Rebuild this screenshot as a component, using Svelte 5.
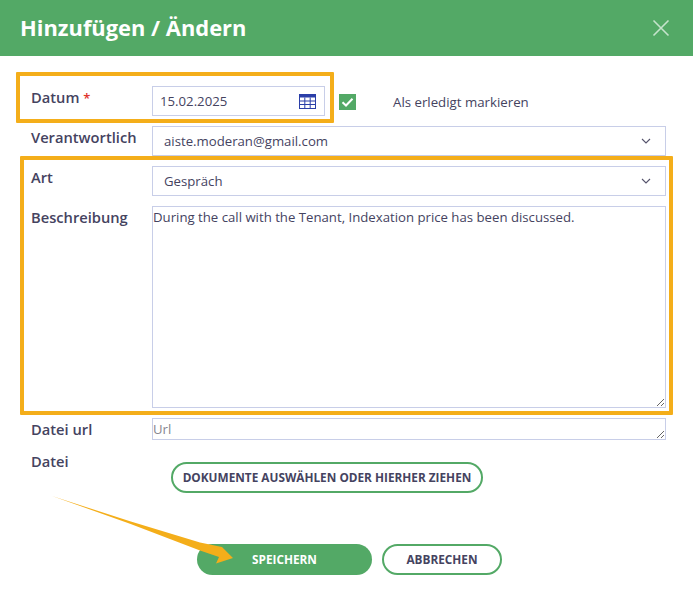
<script>
  let datum = '15.02.2025';
  let beschreibung = 'During the call with the Tenant, Indexation price has been discussed.';
</script>

<div class="modal">
  <header class="head">
    <h1>Hinzufügen / Ändern</h1>
    <svg class="close" width="18" height="18" viewBox="0 0 18 18">
      <path d="M1.5 1.5 16.5 16.5M16.5 1.5 1.5 16.5" />
    </svg>
  </header>

  <form class="form">
    <div class="row">
      <span class="label">Datum <em>*</em></span>
      <div class="date-line">
        <div class="field date">
          <span>{datum}</span>
          <svg width="17" height="15" viewBox="0 0 17 15">
            <rect x="0.5" y="0.5" width="16" height="14" fill="#fff" stroke="#2b3fa8" />
            <rect x="0.5" y="0.5" width="16" height="3" fill="#2b3fa8" />
            <path d="M5.8 3.5V14M11.2 3.5V14M1 7H16M1 10.5H16" stroke="#2b3fa8" fill="none" />
          </svg>
        </div>
        <span class="check">
          <svg width="17" height="16" viewBox="0 0 17 16">
            <path d="M3.5 8.2 7 11.5 13.5 4.8" />
          </svg>
        </span>
        <span class="check-label">Als erledigt markieren</span>
      </div>
    </div>

    <div class="row">
      <span class="label">Verantwortlich</span>
      <div class="field select">
        <span>aiste.moderan@gmail.com</span>
        <svg class="chev" width="10" height="6" viewBox="0 0 10 6"><path d="M1 1 5 5 9 1" /></svg>
      </div>
    </div>

    <div class="row">
      <span class="label">Art</span>
      <div class="field select">
        <span>Gespräch</span>
        <svg class="chev" width="10" height="6" viewBox="0 0 10 6"><path d="M1 1 5 5 9 1" /></svg>
      </div>
    </div>

    <div class="row">
      <span class="label">Beschreibung</span>
      <textarea class="area big" bind:value={beschreibung}></textarea>
    </div>

    <div class="row">
      <span class="label">Datei url</span>
      <textarea class="area small" placeholder="Url"></textarea>
    </div>

    <div class="row file-row">
      <span class="label">Datei</span>
      <button type="button" class="btn outline upload">Dokumente auswählen oder hierher ziehen</button>
    </div>

    <div class="actions">
      <button type="button" class="btn solid">Speichern</button>
      <button type="button" class="btn outline cancel">Abbrechen</button>
    </div>
  </form>

  <!-- Anmerkungen über dem Screenshot -->
  <div class="mark mark-date"></div>
  <div class="mark mark-art"></div>
  <svg class="arrow" width="693" height="599" viewBox="0 0 693 599">
    <path d="M52 496 L130 521.3 L200 542.5 L222 547 L233 558 L216 563.5 L219 557 L200 550.5 L130 523.7 Z" fill="#f4ae1a" />
  </svg>
</div>

<style>
  :global(body) {
    margin: 0;
    background: #fff;
  }

  .modal {
    position: relative;
    width: 693px;
    height: 599px;
    overflow: hidden;
    font-family: "Open Sans", "Noto Sans", sans-serif;
    color: #45435f;
  }

  .head {
    box-sizing: border-box;
    height: 56px;
    background: #53a966;
    display: flex;
    align-items: center;
    justify-content: space-between;
    padding: 0 23px 0 20px;
  }

  h1 {
    margin: 0 0 2px;
    font-size: 21.9px;
    font-weight: 700;
    color: #fff;
  }

  .close path {
    stroke: #c5e3cc;
    stroke-width: 1.6;
    fill: none;
  }

  .form {
    padding: 30px 27px 0 31px;
    display: flex;
    flex-direction: column;
    gap: 10px;
  }

  .row {
    display: grid;
    grid-template-columns: 121px 514px;
    align-items: start;
  }

  .label {
    font-size: 14.7px;
    font-weight: 600;
    line-height: 20px;
    margin-top: 1px;
  }

  .label em {
    color: #e0342c;
    font-style: normal;
    font-size: 13px;
  }

  .date-line {
    display: flex;
    align-items: center;
  }

  .field {
    box-sizing: border-box;
    height: 30px;
    border: 1px solid #c8cee8;
    display: flex;
    align-items: center;
    justify-content: space-between;
    font-size: 13.2px;
  }

  .date {
    width: 173px;
    padding: 0 8px 0 7px;
    flex: none;
  }

  .select {
    padding: 0 14px 0 11px;
  }

  .chev path {
    stroke: #55536c;
    stroke-width: 1.1;
    fill: none;
  }

  .check {
    width: 17px;
    height: 16px;
    margin-left: 14px;
    margin-top: 2px;
    background: #53a966;
    display: block;
  }

  .check svg {
    display: block;
  }

  .check path {
    stroke: #fff;
    stroke-width: 2;
    fill: none;
  }

  .check-label {
    margin-left: 37px;
    margin-top: 2px;
    font-size: 13.25px;
  }

  .area {
    box-sizing: border-box;
    display: block;
    width: 514px;
    margin: 0;
    padding: 0;
    border: 1px solid #c8cee8;
    border-radius: 0;
    outline: none;
    font-family: inherit;
    font-size: 13.2px;
    line-height: 20px;
    color: #45435f;
  }

  .area::placeholder {
    color: #85858f;
    opacity: 1;
  }

  .big {
    height: 202px;
  }

  .small {
    height: 22px;
  }

  .file-row {
    margin-top: 12px;
    height: 31px;
  }

  .file-row .label {
    margin-top: -11px;
  }

  .btn {
    box-sizing: border-box;
    height: 31px;
    padding: 0 0 2px;
    border-radius: 16px;
    font-family: inherit;
    font-size: 11.8px;
    font-weight: 700;
    text-transform: uppercase;
  }

  .outline {
    background: #fff;
    border: 2px solid #53a966;
    color: #45435f;
  }

  .solid {
    width: 175px;
    background: #53a966;
    border: none;
    color: #fff;
  }

  .upload {
    width: 312px;
    margin-left: 19px;
  }

  .cancel {
    width: 120px;
  }

  .actions {
    display: flex;
    justify-content: center;
    gap: 10px;
    margin-top: 41px;
    padding-left: 6px;
    padding-right: 4px;
  }

  .mark {
    position: absolute;
    box-sizing: border-box;
    border: 4px solid #f4ae1a;
    border-radius: 1px;
    pointer-events: none;
  }

  .mark-date {
    left: 16px;
    top: 72px;
    width: 318px;
    height: 51px;
  }

  .mark-art {
    left: 20px;
    top: 156px;
    width: 653px;
    height: 259px;
  }

  .arrow {
    position: absolute;
    left: 0;
    top: 0;
    pointer-events: none;
  }
</style>
